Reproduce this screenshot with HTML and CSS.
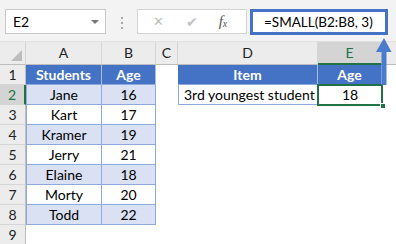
FILE: index.html
```html
<!DOCTYPE html>
<html lang="en">
<head>
<meta charset="utf-8">
<title>SMALL</title>
<link rel="stylesheet" href="styles.css">
</head>
<body>
<div class="app">
	<div class="toolbar">
		<div class="namebox">E2<span class="drop"></span></div>
		<div class="dots"><i></i><i></i><i></i></div>
		<div class="funcs">
			<span class="ico x">&#x2715;</span>
			<span class="ico ok">&#x2714;</span>
			<span class="ico fx">f<sub>x</sub></span>
		</div>
		<div class="formula">=SMALL(B2:B8, 3)</div>
	</div>

	<div class="sheet">
		<div class="hd corner"><span></span></div>
		<div class="hd">A</div>
		<div class="hd">B</div>
		<div class="hd">C</div>
		<div class="hd">D</div>
		<div class="hd sel">E</div>
		<div class="hd last"></div>

		<div class="rh">1</div>
		<div class="th first">Students</div>
		<div class="th">Age</div>
		<div class="cell"></div>
		<div class="th first">Item</div>
		<div class="th">Age</div>
		<div class="cell"></div>

		<div class="rh sel">2</div>
		<div class="td band first">Jane</div>
		<div class="td band">16</div>
		<div class="cell"></div>
		<div class="td first left">3rd youngest student</div>
		<div class="td active">18<span class="handle"></span></div>
		<div class="cell"></div>

		<div class="rh">3</div>
		<div class="td first">Kart</div>
		<div class="td">17</div>
		<div class="cell"></div><div class="cell"></div><div class="cell"></div><div class="cell"></div>

		<div class="rh">4</div>
		<div class="td band first">Kramer</div>
		<div class="td band">19</div>
		<div class="cell"></div><div class="cell"></div><div class="cell"></div><div class="cell"></div>

		<div class="rh">5</div>
		<div class="td first">Jerry</div>
		<div class="td">21</div>
		<div class="cell"></div><div class="cell"></div><div class="cell"></div><div class="cell"></div>

		<div class="rh">6</div>
		<div class="td band first">Elaine</div>
		<div class="td band">18</div>
		<div class="cell"></div><div class="cell"></div><div class="cell"></div><div class="cell"></div>

		<div class="rh">7</div>
		<div class="td first">Morty</div>
		<div class="td">20</div>
		<div class="cell"></div><div class="cell"></div><div class="cell"></div><div class="cell"></div>

		<div class="rh">8</div>
		<div class="td band first">Todd</div>
		<div class="td band">22</div>
		<div class="cell"></div><div class="cell"></div><div class="cell"></div><div class="cell"></div>

		<div class="rh">9</div>
		<div class="cell"></div><div class="cell"></div><div class="cell"></div><div class="cell"></div><div class="cell"></div><div class="cell"></div>
	</div>

	<!-- arrow from E2 up to the formula bar -->
	<svg class="arrow" width="18" height="50" viewBox="0 0 18 50">
		<rect x="7.5" y="13" width="5" height="35" fill="#4a7bcf"/>
		<polygon points="10,1 17.5,15 2,15" fill="#4a7bcf"/>
	</svg>
</div>
</body>
</html>
```

FILE: styles.css
```css
*{
	margin: 0;
	padding: 0;
	box-sizing: border-box;
}
body{
	width: 396px;
	height: 244px;
	overflow: hidden;
	background: #fff;
	font: 14px "Lato", "Liberation Sans", sans-serif;
	color: #000;
}
.app{
	position: relative;
	width: 396px;
	height: 244px;
}

/* formula bar */
.toolbar{
	display: flex;
	align-items: flex-start;
	height: 41px;
	padding: 9px 0 0 5px;
	background: #f3f3f3;
}
.namebox{
	position: relative;
	width: 101px;
	height: 25px;
	padding-left: 7px;
	line-height: 23px;
	font-size: 14px;
	background: #fff;
	border: 1px solid #c8c8c8;
}
.drop{
	position: absolute;
	right: 6px;
	top: 10px;
	border-left: 4px solid transparent;
	border-right: 4px solid transparent;
	border-top: 4px solid #777;
}
.dots{
	display: flex;
	flex-direction: column;
	align-items: center;
	gap: 3px;
	width: 31px;
	padding-top: 8px;
}
.dots i{
	width: 2px;
	height: 2px;
	background: #aaa;
}
.funcs{
	display: flex;
	align-items: center;
	width: 110px;
	height: 25px;
	background: #fff;
	border: 1px solid #d4d4d4;
}
.ico{
	color: #bdbdbd;
	font-family: "DejaVu Sans", sans-serif;
}
.x{
	margin-left: 15px;
	font-size: 13px;
}
.ok{
	margin-left: 22px;
	font-size: 14px;
	color: #c4c4c4;
}
.fx{
	margin-left: 21px;
	font: italic 15px "Liberation Serif", serif;
	color: #555;
}
.fx sub{
	font-size: 10px;
	vertical-align: -1px;
}
.formula{
	width: 138px;
	height: 26px;
	margin-left: 3px;
	padding-left: 11px;
	line-height: 20px;
	font-size: 13.5px;
	background: #fff;
	border: 3px solid #4472c4;
}

/* grid */
.sheet{
	display: grid;
	grid-template-columns: 26px 76px 54px 22px 140px 64px 14px;
	grid-template-rows: 23px repeat(9, 20px);
	border-top: 1px solid #e0e0e0;
}
.hd{
	background: #ececec;
	border-right: 1px solid #d6d6d6;
	border-bottom: 1px solid #bdbdbd;
	text-align: center;
	line-height: 22px;
	font-size: 14px;
	color: #222;
}
.hd.last{
	border-right: none;
}
.hd.sel{
	background: #d4d4d4;
	color: #217346;
	border-bottom: 2px solid #217346;
}
.corner{
	position: relative;
}
.corner span{
	position: absolute;
	right: 3px;
	bottom: 3px;
	border-left: 11px solid transparent;
	border-bottom: 11px solid #bcbcbc;
}
.rh{
	background: #ececec;
	border-right: 1px solid #bdbdbd;
	border-bottom: 1px solid #d6d6d6;
	text-align: center;
	line-height: 19px;
	font-size: 14px;
	color: #222;
}
.rh.sel{
	background: #d4d4d4;
	color: #217346;
	border-right: 2px solid #217346;
}
.cell{
	background: #fff;
}
.th, .td{
	border-right: 1px solid #8ea9db;
	border-bottom: 1px solid #8ea9db;
	text-align: center;
	line-height: 19px;
	white-space: nowrap;
}
.th{
	background: #4472c4;
	color: #fff;
	font-weight: bold;
	border-right-color: #a9bde3;
}
.first{
	border-left: 1px solid #8ea9db;
}
.th.first{
	border-left: none;
}
.td.band{
	background: #d9e1f2;
}
.td.left{
	text-align: left;
	padding-left: 5px;
}
.td.active{
	position: relative;
	border: none;
	outline: 2px solid #217346;
	outline-offset: -1px;
	z-index: 1;
}
.handle{
	position: absolute;
	right: -4px;
	bottom: -4px;
	width: 6px;
	height: 6px;
	background: #217346;
	border: 1px solid #fff;
}

.arrow{
	position: absolute;
	left: 374px;
	top: 37px;
	z-index: 2;
}
```
